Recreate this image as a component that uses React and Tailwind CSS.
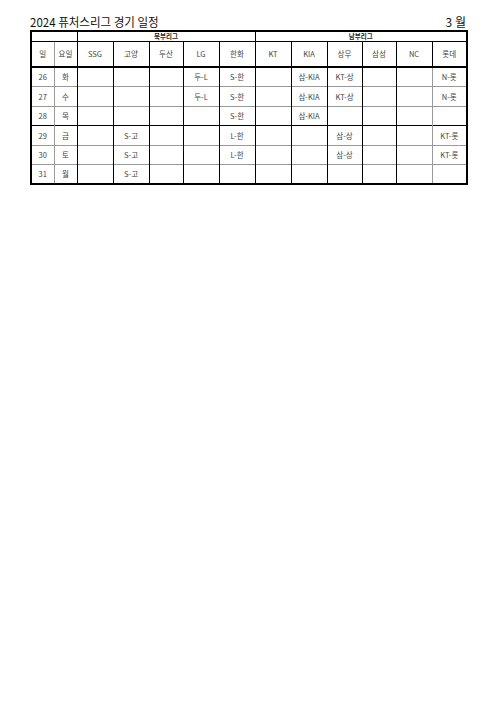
const COLS = [
  { key: 'SSG', w: 'w-[36px]' },
  { key: '고양', w: 'w-[36px]' },
  { key: '두산', w: 'w-[34px]' },
  { key: 'LG', w: 'w-[36px]' },
  { key: '한화', w: 'w-[36px]' },
  { key: 'KT', w: 'w-[36px]' },
  { key: 'KIA', w: 'w-[36px]' },
  { key: '상무', w: 'w-[35px]' },
  { key: '삼성', w: 'w-[34px]' },
  { key: 'NC', w: 'w-[36px]' },
  { key: '롯데', w: 'w-[35px]' },
]

const ROWS = [
  { d: '26', w: '화', g: { LG: '두-L', 한화: 'S-한', KIA: '삼-KIA', 상무: 'KT-상', 롯데: 'N-롯' } },
  { d: '27', w: '수', g: { LG: '두-L', 한화: 'S-한', KIA: '삼-KIA', 상무: 'KT-상', 롯데: 'N-롯' } },
  { d: '28', w: '목', g: { 한화: 'S-한', KIA: '삼-KIA' }, thick: true },
  { d: '29', w: '금', g: { 고양: 'S-고', 한화: 'L-한', 상무: '삼-상', 롯데: 'KT-롯' } },
  { d: '30', w: '토', g: { 고양: 'S-고', 한화: 'L-한', 상무: '삼-상', 롯데: 'KT-롯' } },
  { d: '31', w: '월', g: { 고양: 'S-고' } },
]

// column's left border: gray before 롯데, black elsewhere
const colBorder = (k) => (k === '롯데' ? 'border-l-[#9a9a9a]' : 'border-l-black')

export default function App() {
  return (
    <div className="w-[496px] h-[702px] bg-white pt-[12px] pl-[30px] text-[#444]" style={{ fontFamily: '"Noto Sans CJK KR", "Noto Sans", sans-serif' }}>
      <div className="w-[437px] flex items-end justify-between h-[16px] mb-[2px] text-[#111]">
        <span className="text-[12px] leading-none origin-left scale-x-[0.96] inline-block whitespace-nowrap">2024 퓨처스리그 경기 일정</span>
        <span className="text-[12px] leading-none mr-[1px]">3 월</span>
      </div>
      <table className="table-fixed border-collapse w-[437px] border-2 border-black text-[7.5px] leading-none">
        <colgroup>
          <col className="w-[23px]" />
          <col className="w-[23px]" />
          {COLS.map((c) => (
            <col key={c.key} className={c.w} />
          ))}
        </colgroup>
        <thead>
          <tr className="h-[10px]">
            <th colSpan={2} className="border border-black"></th>
            <th colSpan={5} className="border border-black font-semibold text-[6.5px] text-[#222]">북부리그</th>
            <th colSpan={6} className="border border-black font-semibold text-[6.5px] text-[#222]">남부리그</th>
          </tr>
          <tr className="h-[26px] border-b-2 border-b-black">
            <th className="border border-black border-r-[#9a9a9a] font-normal">일</th>
            <th className="border border-black border-l-[#9a9a9a] font-normal">요일</th>
            {COLS.map((c) => (
              <th key={c.key} className={`border border-black ${colBorder(c.key)} font-normal`}>
                {c.key}
              </th>
            ))}
          </tr>
        </thead>
        <tbody>
          {ROWS.map((r) => (
            <tr key={r.d} className={`h-[19.5px] border-b ${r.thick ? 'border-b-black' : 'border-b-[#9a9a9a]'}`}>
              <td className="border-r border-r-[#9a9a9a] text-center">{r.d}</td>
              <td className="border-x border-l-[#9a9a9a] border-r-black text-center">{r.w}</td>
              {COLS.map((c) => (
                <td key={c.key} className={`border-l ${colBorder(c.key)} text-center whitespace-nowrap`}>
                  {r.g[c.key] || ''}
                </td>
              ))}
            </tr>
          ))}
        </tbody>
      </table>
    </div>
  )
}
